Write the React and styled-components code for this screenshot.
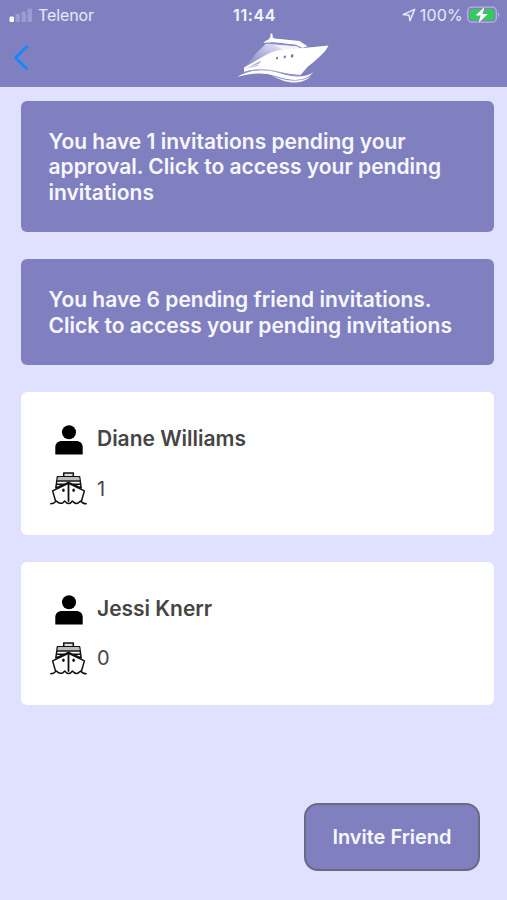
import React from 'react';
import styled, { createGlobalStyle } from 'styled-components';

const GlobalStyle = createGlobalStyle`
  * {
    box-sizing: border-box;
  }

  body {
    margin: 0;
    background: #e0e0ff;
    font-family: 'Inter', 'Liberation Sans', sans-serif;
  }
`

const Screen = styled.div`
  display: flex;
  flex-direction: column;
  height: 100vh;
  overflow: hidden;
  background: #e0e0ff;
`

const Header = styled.header`
  display: flex;
  flex-direction: column;
  flex: none;
  height: 87px;
  background: #8080c0;
`

const StatusBar = styled.div`
  display: grid;
  grid-template-columns: 1fr auto 1fr;
  align-items: center;
  height: 30px;
  padding: 0 7px 0 9px;
  color: #e9e9fb;
  font-size: 16px;
  line-height: 30px;
`

const StatusGroup = styled.div`
  display: flex;
  align-items: center;
  gap: ${props => props.$gap};
  justify-content: ${props => (props.$end ? 'flex-end' : 'flex-start')};
`

const StatusText = styled.span`
  letter-spacing: ${props => props.$spacing || '0'};
`

const Clock = styled.span`
  color: #f4f4ff;
  font-weight: 600;
  letter-spacing: 0.6px;
`

const NavBar = styled.nav`
  display: flex;
  align-items: flex-start;
  padding-left: 11px;
`

const BackButton = styled.button`
  display: flex;
  width: 24px;
  margin: 12px 201px 0 0;
  padding: 0;
  border: 0;
  background: none;
`

const Content = styled.main`
  display: flex;
  flex: 1;
  flex-direction: column;
  gap: 27.4px;
  padding: 13.6px 13.5px 0 21px;
`

const Notice = styled.div`
  padding: 28px 27px 26.5px 27.5px;
  border-radius: 6px;
  background: #8080c0;
  color: #f7f7ff;
  font-size: 21px;
  font-weight: 600;
  line-height: 25.6px;
  white-space: nowrap;
`

const FriendCard = styled.div`
  display: flex;
  flex-direction: column;
  height: 142.4px;
  padding: 31.7px 28px 0;
  border-radius: 6px;
  background: #fff;
  color: #454545;
`

const FriendRow = styled.div`
  display: grid;
  grid-template-columns: 39px 1fr;
  column-gap: 9px;
  align-items: center;
  height: 32px;
  margin-bottom: 16px;
`

const IconBox = styled.div`
  display: flex;
  justify-content: center;
`

const FriendName = styled.span`
  font-size: 21px;
  font-weight: 600;
  line-height: 26px;
  letter-spacing: -0.02px;
  transform: translateY(-1px);
`

const TripCount = styled.span`
  font-size: 20px;
  line-height: 26px;
`

const Footer = styled.footer`
  display: flex;
  flex: none;
  justify-content: flex-end;
  padding: 0 27px 29px 0;
`

const InviteButton = styled.button`
  width: 176px;
  height: 68px;
  padding: 0;
  border: 2px solid #6a6a86;
  border-radius: 14px;
  background: #8080c0;
  color: #f7f7ff;
  font-family: inherit;
  font-size: 20px;
  font-weight: 600;
  letter-spacing: -0.02px;
`

const SignalIcon = () => (
  <svg width="24" height="15" viewBox="0 0 24 15">
    <rect x="0.5" y="8.5" width="4.5" height="5.5" rx="1.3" fill="#fff" />
    <rect x="6.5" y="6" width="4.5" height="8" rx="1.3" fill="#9c9cd2" />
    <rect x="12.5" y="3.5" width="4.5" height="10.5" rx="1.3" fill="#9c9cd2" />
    <rect x="18.5" y="0.5" width="4.5" height="13.5" rx="1.3" fill="#9c9cd2" />
  </svg>
)

const LocationIcon = () => (
  <svg width="14" height="14" viewBox="0 0 13 13">
    <path d="M11.7 1.3L7.4 11.8L6.6 6.8L1 6.1Z" fill="none" stroke="#e9e9fb" strokeWidth="1.4" strokeLinejoin="round" />
  </svg>
)

const BatteryIcon = () => (
  <svg width="33" height="18" viewBox="0 0 33 18">
    <rect x="0.7" y="1.2" width="28.6" height="15" rx="4" fill="none" stroke="#b5b5de" strokeWidth="1.3" />
    <path d="M31 6.5C32.7 7.1 32.7 10.3 31 10.9Z" fill="#b5b5de" />
    <rect x="2.7" y="3.2" width="24.6" height="11" rx="2.3" fill="#35cb5b" />
    <path d="M17.6 0.8L8.6 9.6H13.6L11.5 17L20.9 7.9H15.4Z" fill="#fff" stroke="#8080c0" strokeWidth="0.7" paintOrder="stroke" />
  </svg>
)

const BackIcon = () => (
  <svg width="20" height="31" viewBox="0 0 20 31">
    <path d="M16.5 4L4.5 15.7L16.5 27.5" fill="none" stroke="#1688ff" strokeWidth="3" strokeLinejoin="round" />
  </svg>
)

const YachtLogo = () => (
  <svg width="95" height="56" viewBox="-0.5 -2 95 56">
    <defs>
      <linearGradient id="deck" x1="0" y1="0.8" x2="0.8" y2="0.2">
        <stop offset="0" stopColor="#8c8cc7" />
        <stop offset="0.5" stopColor="#b8b8e0" />
        <stop offset="1" stopColor="#ededfa" />
      </linearGradient>
    </defs>
    <path d="M9 34L20 21L30 11L62 14L66 18L44 31L17 35Z" fill="url(#deck)" />
    <path d="M27 11C29 8 34 6.5 41 6.8L63 9L71 14.2L66 16L59 12.8L37 10.3Z" fill="#fff" />
    <path d="M31 7.5L33.5 6L34.2 1.5H35.8L36.3 5.5L40 7.5Z" fill="#fff" />
    <path d="M29 11L60 13.6L65 16.2" fill="none" stroke="#8787c4" strokeWidth="1" />
    <path d="M38 13L61 15.5L65 17.5L48 18.5Z" fill="#f3f3fc" />
    <path d="M7.5 40V35.5L25 25.5C36 18.5 45 17 57 17L92 13.5C89 21 78 29 71 35L64 43C51 42 40 39 28 38C19 37.5 13 38 7.5 40Z" fill="#fff" />
    <path d="M8.5 37L25 28.5L21 34Z" fill="#a5a5d5" />
    <path d="M10 36.6L23.5 31.5" stroke="#fff" strokeWidth="0.8" />
    <path d="M39.5 25.6L41.5 24.8V26.8L39.5 27.4ZM47.3 24L49.3 23.4V25.8L47.3 26.4ZM54.5 22.8L56.8 22V25L54.5 25.8Z" fill="#75759f" />
    <path d="M0.5 45C14 37 29 36.5 43 41C55 45 67 46.5 77 40.5C67 51 52 48.5 39 44C27 40 14 41 0.5 45Z" fill="#fff" />
    <path d="M34 42.5C49 50 64 50.5 75 44C64 54 49 52 34 42.5Z" fill="#f4f4ff" />
    <path d="M7.5 40.3C20 36.5 32 37 44 40.5C54 43.5 60 44 65 43" fill="none" stroke="#a3a3d4" strokeWidth="0.8" />
  </svg>
)

const PersonIcon = () => (
  <svg width="28" height="30" viewBox="0 0 28 30">
    <circle cx="14" cy="7.3" r="7" fill="#000" />
    <path d="M0.3 29.5V22C0.3 18.2 3.2 16 6.8 16H21.2C24.8 16 27.7 18.2 27.7 22V29.5Z" fill="#000" />
  </svg>
)

const ShipIcon = () => (
  <svg width="37" height="33" viewBox="0 0 37 33" fill="none" stroke="#111" strokeWidth="1.5" strokeLinejoin="round" strokeLinecap="round">
    <path d="M13.7 4.5V1H23.3V4.5" fill="#ddd" />
    <path d="M7.4 4.8H29.6L31.2 16L18.5 10.5L5.8 16Z" fill="#fff" />
    <path d="M8 5H29.2L29.7 8.6H7.5Z" fill="#bbb" stroke="none" />
    <path d="M7.4 9H29.8" strokeWidth="1.6" />
    <path d="M6.8 12.2H13.5M23.5 12.2H30.4" strokeWidth="1.6" />
    <path d="M5.6 29.2L2.6 18.9L18.5 11.2L34.4 18.9L31.4 29.2" fill="#fff" />
    <path d="M18.5 11.6V29" strokeWidth="1.8" />
    <ellipse cx="13.4" cy="18.2" rx="1.3" ry="1.8" fill="#111" stroke="none" />
    <ellipse cx="23.6" cy="18.2" rx="1.3" ry="1.8" fill="#111" stroke="none" />
    <path d="M0.8 31.8C3.5 31.8 4.7 30.8 6.4 29C8 31 9.5 31.8 12 31.2C13.5 30.8 14.1 29.5 14.7 29C16.3 31 17.5 31.5 18.6 31.5C20.3 31.5 21.4 30.5 22.4 29C24 31 25.2 31.6 26.9 31.4C28.9 31.2 29.7 29.8 30.6 29C32 31 33.2 31.8 36.2 31.8" />
  </svg>
)

const friends = [
  { name: 'Diane Williams', trips: 1 },
  { name: 'Jessi Knerr', trips: 0 },
]

const Friend = ({ name, trips }) => (
  <FriendCard>
    <FriendRow>
      <IconBox><PersonIcon /></IconBox>
      <FriendName>{name}</FriendName>
    </FriendRow>
    <FriendRow>
      <IconBox><ShipIcon /></IconBox>
      <TripCount>{trips}</TripCount>
    </FriendRow>
  </FriendCard>
)

const App = () => (
  <>
    <GlobalStyle />
    <Screen>
      <Header>
        <StatusBar>
          <StatusGroup $gap="5px">
            <SignalIcon />
            <StatusText $spacing="-0.1px">Telenor</StatusText>
          </StatusGroup>
          <Clock>11:44</Clock>
          <StatusGroup $gap="4px" $end>
            <LocationIcon />
            <StatusText $spacing="0.2px">100%</StatusText>
            <BatteryIcon />
          </StatusGroup>
        </StatusBar>
        <NavBar>
          <BackButton aria-label="Back"><BackIcon /></BackButton>
          <YachtLogo />
        </NavBar>
      </Header>
      <Content>
        <Notice>
          You have 1 invitations pending your<br />
          approval. Click to access your pending<br />
          invitations
        </Notice>
        <Notice>
          You have 6 pending friend invitations.<br />
          Click to access your pending invitations
        </Notice>
        {friends.map(friend => <Friend key={friend.name} {...friend} />)}
      </Content>
      <Footer>
        <InviteButton>Invite Friend</InviteButton>
      </Footer>
    </Screen>
  </>
)

export default App;
